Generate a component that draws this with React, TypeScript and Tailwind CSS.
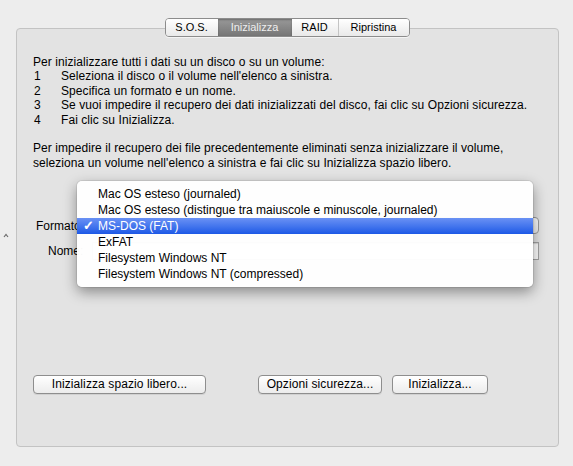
import React from 'react';

const tabs = [
  { label: 'S.O.S.', w: 'w-[52px]' },
  { label: 'Inizializza', w: 'w-[74px]', active: true },
  { label: 'RAID', w: 'w-[46px]' },
  { label: 'Ripristina', w: 'w-[71px]' },
];

const steps = [
  "Seleziona il disco o il volume nell'elenco a sinistra.",
  'Specifica un formato e un nome.',
  'Se vuoi impedire il recupero dei dati inizializzati del disco, fai clic su Opzioni sicurezza.',
  'Fai clic su Inizializza.',
];

const formats = [
  'Mac OS esteso (journaled)',
  'Mac OS esteso (distingue tra maiuscole e minuscole, journaled)',
  'MS-DOS (FAT)',
  'ExFAT',
  'Filesystem Windows NT',
  'Filesystem Windows NT (compressed)',
];

const Button = ({ label, w }: { label: string; w: string }) => (
  <button
    className={`${w} h-[19px] rounded-[4px] border border-[#8e8e8e] bg-gradient-to-b from-[#ffffff] to-[#ececec] shadow-[0_1px_0_rgba(0,0,0,0.08)] text-[12px] leading-[17px] tracking-[0.1px] text-black`}
  >
    {label}
  </button>
);

const App: React.FC = () => {
  return (
    <div className="relative w-[573px] h-[466px] overflow-hidden bg-[#ededed] pt-[28px] pl-[16px] font-['Lucida_Grande','Liberation_Sans',Arial,sans-serif] text-black">
      {/* split view handle */}
      <svg className="absolute left-[3px] top-[233px]" width="6" height="5" viewBox="0 0 6 5">
        <path d="M1 4 L3 1.5 L5 4" fill="none" stroke="#6b6b6b" strokeWidth="1.2" />
      </svg>

      <div className="relative w-[543px] h-[419px] rounded-[4px] border border-[#c3c3c3] bg-[#e3e3e3]">
        {/* tabs */}
        <div className="flex justify-center -mt-[11px] pr-[1px]">
          <div className="flex h-[19px] rounded-[4px] border border-[#8c8c8c] overflow-hidden shadow-[0_1px_0_rgba(255,255,255,0.6)]">
            {tabs.map((t, i) => (
              <div
                key={t.label}
                className={`${t.w} flex items-center justify-center text-[11px] ${
                  t.active
                    ? 'bg-gradient-to-b from-[#999999] to-[#767676] text-[#eeeeee] shadow-[inset_0_1px_2px_rgba(0,0,0,0.3)]'
                    : 'bg-gradient-to-b from-[#ffffff] to-[#e9e9e9] text-black'
                } ${i === 3 ? 'border-l border-[#c4c4c4]' : ''}`}
              >
                {t.label}
              </div>
            ))}
          </div>
        </div>

        {/* instructions */}
        <div className="mt-[18px] pl-[16px] text-[12px] leading-[14.4px] tracking-[0.07px]">
          <p>Per inizializzare tutti i dati su un disco o su un volume:</p>
          {steps.map((s, i) => (
            <div key={i} className="flex">
              <span className="w-[28px] pl-[1px]">{i + 1}</span>
              <span>{s}</span>
            </div>
          ))}
          <p className="mt-[14.4px]">
            Per impedire il recupero dei file precedentemente eliminati senza inizializzare il volume,
            <br />
            seleziona un volume nell'elenco a sinistra e fai clic su Inizializza spazio libero.
          </p>
        </div>

        {/* form */}
        <div className="mt-[47px] flex flex-col gap-[8px] text-[12px]">
          <div className="flex items-center h-[17px]">
            <span className="w-[72px] pl-[19px] whitespace-nowrap">Formato:</span>
            <div className="ml-[3px] w-[447px] h-[17px] rounded-[4px] border border-[#9a9a9a] bg-gradient-to-b from-[#ffffff] to-[#ededed]" />
          </div>
          <div className="flex items-center h-[18px]">
            <span className="w-[72px] pl-[31px] whitespace-nowrap">Nome:</span>
            <div className="ml-[3px] w-[447px] h-[18px] border border-[#a3a3a3] bg-white shadow-[inset_0_1px_1px_rgba(0,0,0,0.15)]" />
          </div>
        </div>

        {/* bottom buttons */}
        <div className="mt-[115px] flex pl-[16px]">
          <Button label="Inizializza spazio libero..." w="w-[173px]" />
          <div className="ml-[52px] flex gap-[10px]">
            <Button label="Opzioni sicurezza..." w="w-[124px]" />
            <Button label="Inizializza..." w="w-[96px]" />
          </div>
        </div>

        {/* open popup menu */}
        <div className="absolute left-[60px] top-[152px] w-[456px] rounded-[5px] bg-white/[0.97] pt-[5px] pb-[5px] shadow-[0_5px_14px_rgba(0,0,0,0.4),0_0_0_1px_rgba(0,0,0,0.08)] text-[12px]">
          {formats.map((f) => {
            const sel = f === 'MS-DOS (FAT)';
            return (
              <div
                key={f}
                className={`relative h-[16px] leading-[16px] pl-[21px] whitespace-nowrap ${
                  sel ? 'bg-gradient-to-b from-[#6a91f4] to-[#1c58e6] text-white' : 'text-black'
                }`}
              >
                {sel && <span className="absolute left-[6px] top-0 text-[13px] font-bold">✓</span>}
                {f}
              </div>
            );
          })}
        </div>
      </div>
    </div>
  );
};

export default App;
